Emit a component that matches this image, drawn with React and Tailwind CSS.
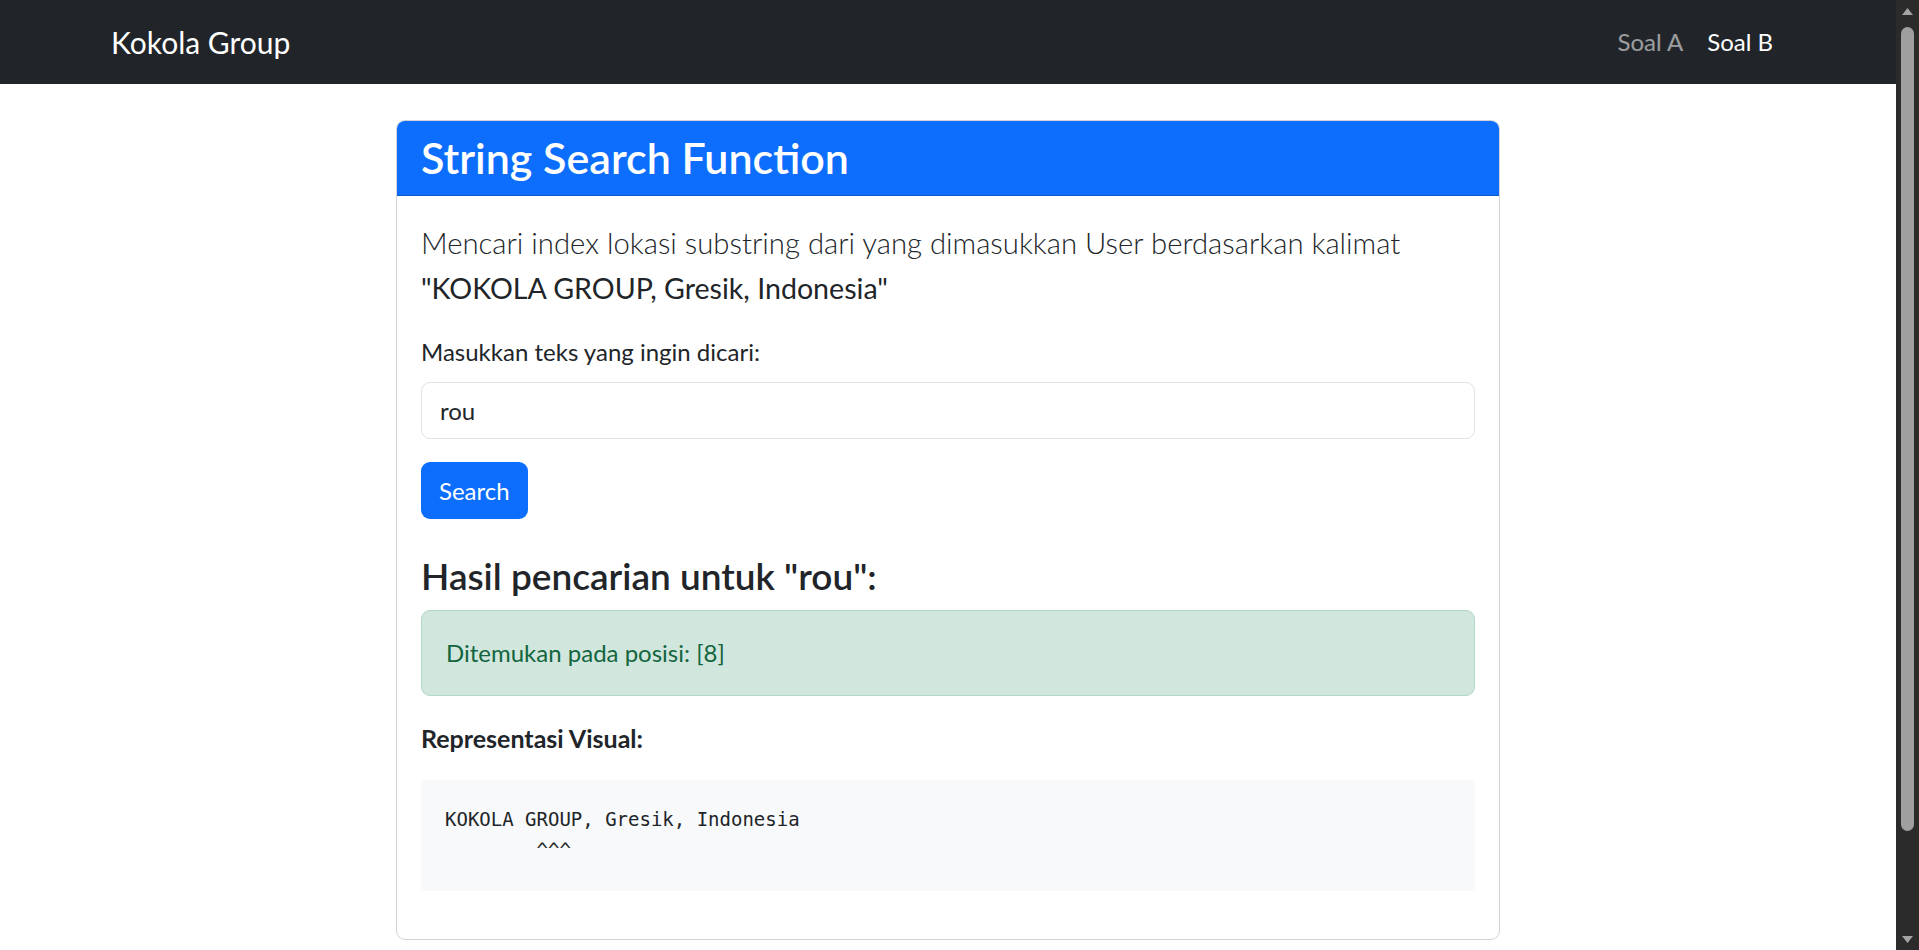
import { useState } from 'react';

const SENTENCE = 'KOKOLA GROUP, Gresik, Indonesia';

function findAll(text, term) {
  const hits = [];
  if (!term) return hits;
  const hay = text.toLowerCase();
  const needle = term.toLowerCase();
  let i = hay.indexOf(needle);
  while (i !== -1) {
    hits.push(i);
    i = hay.indexOf(needle, i + 1);
  }
  return hits;
}

function caretLine(hits, len) {
  const row = Array(SENTENCE.length).fill(' ');
  hits.forEach((h) => {
    for (let k = 0; k < len; k++) row[h + k] = '^';
  });
  return row.join('').replace(/\s+$/, '');
}

function Scrollbar() {
  return (
    <div className="flex w-[23px] shrink-0 flex-col items-center bg-[#2b2b2b]">
      <div className="flex h-[22px] w-full items-center justify-center">
        <svg width="11" height="7" viewBox="0 0 11 7"><polygon points="5.5,0 11,7 0,7" fill="#a3a3a3" /></svg>
      </div>
      <div className="mt-[5px] h-[804px] w-[13px] rounded-full bg-[#9f9f9f]" />
      <div className="flex-1" />
      <div className="flex h-[22px] w-full items-center justify-center">
        <svg width="11" height="7" viewBox="0 0 11 7"><polygon points="0,0 11,0 5.5,7" fill="#a3a3a3" /></svg>
      </div>
    </div>
  );
}

export default function App() {
  const [query, setQuery] = useState('rou');
  const [term, setTerm] = useState('rou');

  const hits = findAll(SENTENCE, term);

  const handleSearch = (e) => {
    e.preventDefault();
    setTerm(query);
  };

  return (
    <div className="flex h-screen overflow-hidden bg-white font-['Lato',sans-serif] text-[#212529]">
      <div className="min-w-0 flex-1 overflow-hidden">
        <nav className="h-[84px] bg-[#212529]">
          <div className="mx-auto flex h-full max-w-[1710px] items-center justify-between px-[18px]">
            <a href="#" className="text-[30px] leading-[45px] text-white">Kokola Group</a>
            <div className="flex">
              <a href="#" className="px-[12px] text-[24px] leading-[36px] text-white/55">Soal A</a>
              <a href="#" className="px-[12px] text-[24px] leading-[36px] text-white">Soal B</a>
            </div>
          </div>
        </nav>

        <main className="mx-auto mt-[36px] w-[1104px]">
          <div className="overflow-hidden rounded-[9px] border border-[#d3d3d4]">
            <div className="border-b border-black/20 bg-[#0d6efd] px-[24px] py-[12px]">
              <h3 className="text-[43px] font-semibold leading-[50.4px] text-white">String Search Function</h3>
            </div>

            <div className="p-[24px]">
              <p className="mb-[23px] text-[29.3px] font-light leading-[45px]">
                Mencari index lokasi substring dari yang dimasukkan User berdasarkan kalimat
                <br />
                <strong className="text-[28.6px] font-normal">"{SENTENCE}"</strong>
              </p>

              <form onSubmit={handleSearch}>
                <label htmlFor="term" className="mb-[12px] block text-[24px] leading-[36px]">Masukkan teks yang ingin dicari:</label>
                <input
                  id="term"
                  type="text"
                  value={query}
                  onChange={(e) => setQuery(e.target.value)}
                  className="mb-[23px] block h-[57px] w-full rounded-[9px] border border-[#dee2e6] px-[18px] text-[24px] leading-[36px] focus:outline-none"
                />
                <button type="submit" className="h-[57px] rounded-[9px] bg-[#0d6efd] px-[18px] text-[24px] leading-[36px] text-white">
                  Search
                </button>
              </form>

              <h4 className="mt-[35px] mb-[12px] text-[37px] font-semibold leading-[43.2px]">Hasil pencarian untuk "{term}":</h4>

              <div className="mb-[24px] rounded-[9px] border border-[#b3d8c6] bg-[#d1e7dd] p-[24px] text-[24px] leading-[36px] text-[#13653f]">
                {hits.length ? `Ditemukan pada posisi: [${hits.join(', ')}]` : 'Tidak ditemukan.'}
              </div>

              <p className="mb-[24px] text-[25px] font-bold leading-[36px]">Representasi Visual:</p>

              <pre className="mb-[24px] bg-[#f8f9fa] p-[24px] font-['DejaVu_Sans_Mono',monospace] text-[19px] leading-[31.5px]">
                {SENTENCE}
                {'\n'}
                {caretLine(hits, term.length)}
              </pre>
            </div>
          </div>
        </main>
      </div>
      <Scrollbar />
    </div>
  );
}
